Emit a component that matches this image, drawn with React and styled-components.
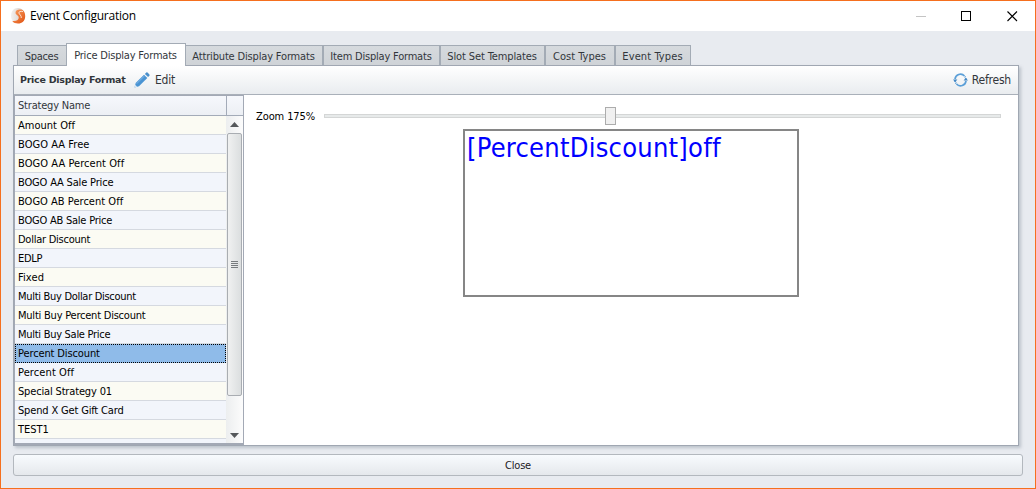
import React from 'react';
import styled, { createGlobalStyle, css } from 'styled-components';

const Global = createGlobalStyle`
  * { box-sizing: border-box; }
  body { margin: 0; overflow: hidden; }
`;

const ui = '"Tahoma", "DejaVu Sans Condensed", "DejaVu Sans", sans-serif';

const Window = styled.div`
  width: 1036px;
  height: 489px;
  border: 1px solid #f56f1e;
  background: #e8ebf0;
  display: flex;
  flex-direction: column;
  font: 11px/20px ${ui};
  color: #000;
  white-space: nowrap;
`;

const Label = styled.span`
  letter-spacing: ${p => p.$ls ?? -0.2}px;
`;

const TitleBar = styled.header`
  height: 30px;
  background: #fff;
  display: flex;
  align-items: center;
  padding: 0 17px 0 9px;
  flex: none;
`;

const Title = styled.h1`
  margin: 0 auto 0 4px;
  font: 400 12px/30px "Segoe UI", "Open Sans", sans-serif;
`;

const WindowButtons = styled.div`
  display: flex;
  gap: 35px;
  svg { display: block; }
`;

const Body = styled.main`
  flex: 1;
  padding: 12px 12px 0;
`;

const Tabs = styled.nav`
  display: flex;
  align-items: flex-end;
  height: 22px;
  padding-left: 4px;
`;

const Tab = styled.button`
  width: ${p => p.$w}px;
  height: 20px;
  padding: 2px 1px 0 0;
  border: 1px solid #a3abb5;
  border-bottom: 0;
  background: linear-gradient(#d6dade, #cfd3d7);
  color: #32363b;
  font: inherit;
  line-height: 16px;
  text-align: center;
  ${p => p.$side === 'before' && css`border-right: 0;`}
  ${p => p.$side === 'after' && css`border-left: 0;`}
  ${p => p.$active && css`
    height: 23px;
    margin-bottom: -1px;
    padding-top: 1px;
    background: #fff;
    position: relative;
  `}
`;

const Panel = styled.section`
  width: 1006px;
  height: 381px;
  border: 1px solid #a0a7b2;
  background: #fff;
  box-shadow: 2px 2px 3px rgba(110, 120, 135, 0.35);
  display: flex;
  flex-direction: column;
`;

const Toolbar = styled.div`
  height: 29px;
  flex: none;
  display: flex;
  align-items: center;
  padding: 0 7px 0 6px;
  border-bottom: 1px solid #a9b0b9;
  background: linear-gradient(#fff, #e9ecef);
  color: #32363b;
`;

const Heading = styled.strong`
  width: 106px;
  margin-right: 8px;
  font-family: "DejaVu Sans", sans-serif;
  font-size: 9.5px;
`;

const ToolButton = styled.button`
  display: flex;
  align-items: center;
  gap: ${p => (p.$end ? 4 : 5)}px;
  padding: 0;
  border: 0;
  background: none;
  color: inherit;
  font: 12px/18px ${ui};
  margin-left: ${p => (p.$end ? 'auto' : 0)};
`;

const Content = styled.div`
  flex: 1;
  min-height: 0;
  display: flex;
`;

const Grid = styled.div`
  width: 230px;
  height: 350px;
  border: 1px solid #a3a9b5;
  border-bottom-width: 2px;
  display: flex;
  flex-direction: column;
`;

const GridHeader = styled.div`
  height: 20px;
  flex: none;
  display: flex;
  border-bottom: 1px solid #a3abb8;
  background: linear-gradient(#f6f8fc, #eceff4);
  color: #32363b;
`;

const ColumnHead = styled.div`
  width: 212px;
  padding-left: 3px;
  border-right: 1px solid #a3abb8;
`;

const GridBody = styled.div`
  flex: 1;
  min-height: 0;
  display: flex;
`;

const Rows = styled.div`
  width: 211px;
  overflow: hidden;
`;

const Row = styled.div`
  height: 19px;
  padding-left: 3px;
  border-bottom: 1px solid #d5d9e0;
  background: ${p => (p.$odd ? '#f2f5fb' : '#fbfbf3')};
  ${p => p.$selected && css`
    background: #8fbbe9;
    line-height: 18px;
    padding-left: 2px;
    border: 1px dotted #000;
  `}
`;

const ScrollBar = styled.div`
  width: 17px;
  display: flex;
  flex-direction: column;
  align-items: center;
  background: linear-gradient(90deg, #eceeef, #fcfcfc);
  svg { display: block; flex: none; }
`;

const Thumb = styled.div`
  width: 15px;
  height: 263px;
  flex: none;
  border: 1px solid #a9adb2;
  border-radius: 2px;
  background: linear-gradient(90deg, #f0f1f1, #dbdedf);
  display: flex;
  align-items: center;
  justify-content: center;
`;

const Detail = styled.div`
  flex: 1;
  display: flex;
  flex-direction: column;
`;

const ZoomRow = styled.div`
  height: 18px;
  margin-top: 12px;
  display: flex;
  align-items: center;
  padding-left: 12px;
`;

const ZoomLabel = styled.div`
  width: 68px;
  padding-top: 2px;
`;

const Track = styled.div`
  width: 677px;
  height: 4px;
  border: 1px solid #d4d6d6;
  background: #e7eaea;
  display: flex;
  align-items: center;
`;

const Knob = styled.div`
  width: 11px;
  height: 18px;
  margin-left: 280px;
  flex: none;
  border: 1px solid #acacac;
  background: #f0f0f0;
`;

const Preview = styled.div`
  width: 336px;
  height: 168px;
  margin: 4px 0 0 219px;
  border: 2px solid #868686;
  padding-left: 2px;
  color: #00f;
  font: 27px/33px ${ui};
`;

const CloseButton = styled.button`
  display: block;
  width: 1010px;
  height: 22px;
  margin-top: 8px;
  padding: 2px 0 0;
  border: 1px solid #b3b8be;
  border-radius: 3px;
  background: linear-gradient(#f8fbfe, #e5e8ec);
  color: #1d2024;
  font: 11px/18px ${ui};
`;

const AppIcon = () => (
  <svg width="16" height="18" viewBox="0 0 16 18">
    <defs>
      <linearGradient id="shell" x1="0" y1="0" x2="1" y2="0">
        <stop offset="0" stopColor="#f4f1ef" />
        <stop offset="1" stopColor="#cfc6c1" />
      </linearGradient>
      <linearGradient id="orb" x1="0" y1="0" x2="1" y2="1">
        <stop offset="0" stopColor="#f9a266" />
        <stop offset="1" stopColor="#e0500f" />
      </linearGradient>
    </defs>
    <path d="M8 1C3.500 1 1 4.500 1 9s3 7 7 7 7-3 7-7-2.500-8-7-8Z" fill="url(#shell)" />
    <path d="M12.500 3C14.600 4.600 15.300 7 15.200 9.500 15 14 12 16.500 8 16.500 5.500 16.500 3.500 15.800 2.300 14 6.500 14.500 9 13 8.700 10.300 8.500 8 5.500 8 5.500 5.700 5.500 3 9 2 12.500 3Z" fill="url(#orb)" />
    <path d="M13 4.600C10.500 4 8.600 4.600 8.900 6S11.600 8.300 11.300 11" fill="none" stroke="#fde9dc" strokeWidth=".9" />
  </svg>
);

const Pencil = () => (
  <svg width="16" height="16" viewBox="0 0 16 16">
    <path d="M.5 15.500l1.200-4.500L10 2.700l3.300 3.300L5 14.300Z" fill="#4a94d3" />
    <path d="M2.500 11.700l7.700-7.700" stroke="#6faae0" strokeWidth="1.200" />
    <path d="M1.200 12.800l2 2L.5 15.500Z" fill="#d8e8f5" />
    <path d="M10.900 1.900L12.300.6q.6-.5 1.200 0l1.900 1.900q.5.600 0 1.200l-1.300 1.300Z" fill="#4a8fcb" />
  </svg>
);

const RefreshIcon = () => (
  <svg width="15" height="14" viewBox="0 0 15 14" fill="none" stroke="#5b9fd8" strokeWidth="1.700">
    <path d="M2 6.200A5.500 5.500 0 0 1 11.500 3M13 7.800A5.500 5.500 0 0 1 3.500 11" />
    <path d="M12.900 6.800A5.500 5.500 0 0 0 11.800 3.500M2.100 7.200A5.500 5.500 0 0 0 3.200 10.500" strokeDasharray="1.500 1" />
    <path d="M0 6.500h4.400L2.100 9.300ZM10.600 7.500H15l-2.200-2.800Z" fill="#4487c4" stroke="none" />
  </svg>
);

const tabs = [
  { name: 'Spaces', w: 49, side: 'before', ls: -0.3 },
  { name: 'Price Display Formats', w: 120, active: true },
  { name: 'Attribute Display Formats', w: 137, side: 'after', ls: -0.16 },
  { name: 'Item Display Formats', w: 117, ls: -0.2 },
  { name: 'Slot Set Templates', w: 105, ls: -0.12 },
  { name: 'Cost Types', w: 70, ls: 0 },
  { name: 'Event Types', w: 76, ls: 0.1 },
];

const strategies = [
  ['Amount Off', 0.02],
  ['BOGO AA Free', 0.05],
  ['BOGO AA Percent Off', 0.06],
  ['BOGO AA Sale Price', -0.17],
  ['BOGO AB Percent Off', 0.02],
  ['BOGO AB Sale Price', -0.22],
  ['Dollar Discount', -0.25],
  ['EDLP', -0.3],
  ['Fixed', 0.1],
  ['Multi Buy Dollar Discount', -0.3],
  ['Multi Buy Percent Discount', -0.22],
  ['Multi Buy Sale Price', -0.28],
  ['Percent Discount', -0.12],
  ['Percent Off', 0.1],
  ['Special Strategy 01', -0.16],
  ['Spend X Get Gift Card', -0.16],
  ['TEST1', 0],
  ['', 0],
];

export default function App() {
  return (
    <Window>
      <Global />
      <TitleBar>
        <AppIcon />
        <Title><Label $ls={-0.26}>Event Configuration</Label></Title>
        <WindowButtons>
          <svg width="11" height="11"><path d="M1 5.500h10" stroke="#c4c4c4" /></svg>
          <svg width="11" height="11"><rect x=".5" y=".5" width="9" height="9" fill="none" stroke="#000" /></svg>
          <svg width="11" height="11"><path d="M.5.5l9.500 9.500M10 .5L.5 10" stroke="#000" strokeWidth="1.100" /></svg>
        </WindowButtons>
      </TitleBar>
      <Body>
        <Tabs>
          {tabs.map(t => (
            <Tab key={t.name} $w={t.w} $side={t.side} $active={t.active}><Label $ls={t.ls}>{t.name}</Label></Tab>
          ))}
        </Tabs>
        <Panel>
          <Toolbar>
            <Heading><Label $ls={-0.27}>Price Display Format</Label></Heading>
            <ToolButton><Pencil /><Label>Edit</Label></ToolButton>
            <ToolButton $end><RefreshIcon /><Label>Refresh</Label></ToolButton>
          </Toolbar>
          <Content>
            <Grid>
              <GridHeader><ColumnHead><Label>Strategy Name</Label></ColumnHead></GridHeader>
              <GridBody>
                <Rows>
                  {strategies.map(([s, ls], i) => (
                    <Row key={s} $odd={i % 2 === 1} $selected={s === 'Percent Discount'}><Label $ls={ls}>{s}</Label></Row>
                  ))}
                </Rows>
                <ScrollBar>
                  <svg width="17" height="17"><path d="M4 11h9L8.500 6Z" fill="#55585b" /></svg>
                  <Thumb>
                    <svg width="7" height="7"><path d="M0 .5h7M0 2.500h7M0 4.500h7M0 6.500h7" stroke="#777b7e" /></svg>
                  </Thumb>
                  <svg width="17" height="80"><path d="M4 37h9l-4.500 5Z" fill="#55585b" /></svg>
                </ScrollBar>
              </GridBody>
            </Grid>
            <Detail>
              <ZoomRow>
                <ZoomLabel><Label $ls={-0.1}>Zoom 175%</Label></ZoomLabel>
                <Track><Knob /></Track>
              </ZoomRow>
              <Preview><Label $ls={0.25}>[PercentDiscount]off</Label></Preview>
            </Detail>
          </Content>
        </Panel>
        <CloseButton><Label>Close</Label></CloseButton>
      </Body>
    </Window>
  );
}
